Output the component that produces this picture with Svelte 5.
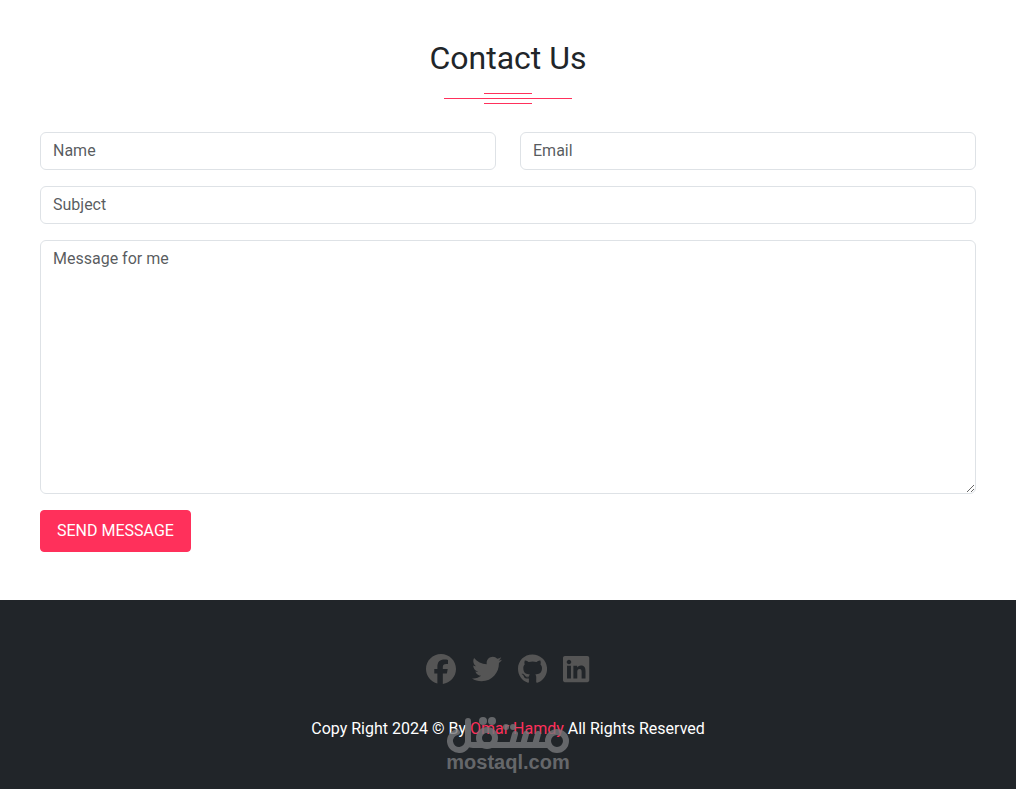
<script lang="ts">
	const icons = [
		{
			label: 'Facebook',
			width: 512,
			path: 'M512 256C512 114.6 397.4 0 256 0S0 114.6 0 256C0 376 82.7 476.8 194.2 504.5V334.2H141.4V256h52.8V222.3c0-87.1 39.4-127.5 125-127.5c16.2 0 44.2 3.2 55.7 6.4V172c-6-.6-16.5-1-29.6-1c-42 0-58.2 15.9-58.2 57.2V256h83.6l-14.4 78.2H287V510.1C413.8 494.8 512 386.9 512 256h0z'
		},
		{
			label: 'Twitter',
			width: 512,
			path: 'M459.37 151.716c.325 4.548.325 9.097.325 13.645 0 138.72-105.583 298.558-298.558 298.558-59.452 0-114.68-17.219-161.137-47.106 8.447.974 16.568 1.299 25.34 1.299 49.055 0 94.213-16.568 130.274-44.832-46.132-.975-84.792-31.188-98.112-72.772 6.498.974 12.995 1.624 19.818 1.624 9.421 0 18.843-1.3 27.614-3.573-48.081-9.747-84.143-51.98-84.143-102.985v-1.299c13.969 7.797 30.214 12.67 47.431 13.319-28.264-18.843-46.781-51.005-46.781-87.391 0-19.492 5.197-37.36 14.294-52.954 51.655 63.675 129.3 105.258 216.365 109.807-1.624-7.797-2.599-15.918-2.599-24.04 0-57.828 46.782-104.934 104.934-104.934 30.213 0 57.502 12.67 76.67 33.137 23.715-4.548 46.456-13.32 66.599-25.34-7.798 24.366-24.366 44.833-46.132 57.827 21.117-2.273 41.584-8.122 60.426-16.243-14.292 20.791-32.161 39.308-52.628 54.253z'
		},
		{
			label: 'GitHub',
			width: 496,
			path: 'M165.9 397.4c0 2-2.3 3.6-5.2 3.6-3.3.3-5.6-1.3-5.6-3.6 0-2 2.3-3.6 5.2-3.6 3-.3 5.6 1.3 5.6 3.6zm-31.1-4.5c-.7 2 1.3 4.3 4.3 4.9 2.6 1 5.6 0 6.2-2s-1.3-4.3-4.3-5.2c-2.6-.7-5.5.3-6.2 2.3zm44.2-1.7c-2.9.7-4.9 2.6-4.6 4.9.3 2 2.9 3.3 5.9 2.6 2.9-.7 4.9-2.6 4.6-4.6-.3-1.9-3-3.2-5.9-2.9zM244.8 8C106.1 8 0 113.3 0 252c0 110.9 69.8 205.8 169.5 239.2 12.8 2.3 17.3-5.6 17.3-12.1 0-6.2-.3-40.4-.3-61.4 0 0-70 15-84.7-29.8 0 0-11.4-29.1-27.8-36.6 0 0-22.9-15.7 1.6-15.4 0 0 24.9 2 38.6 25.8 21.9 38.6 58.6 27.5 72.9 20.9 2.3-16 8.8-27.1 16-33.7-55.9-6.2-112.3-14.3-112.3-110.5 0-27.5 7.6-41.3 23.6-58.9-2.6-6.5-11.1-33.3 2.6-67.9 20.9-6.5 69 27 69 27 20-5.6 41.5-8.5 62.8-8.5s42.8 2.9 62.8 8.5c0 0 48.1-33.6 69-27 13.7 34.7 5.2 61.4 2.6 67.9 16 17.7 25.8 31.5 25.8 58.9 0 96.5-58.9 104.2-114.8 110.5 9.2 7.9 17 22.9 17 46.4 0 33.7-.3 75.4-.3 83.6 0 6.5 4.6 14.4 17.3 12.1C428.2 457.8 496 362.9 496 252 496 113.3 383.5 8 244.8 8z'
		},
		{
			label: 'LinkedIn',
			width: 448,
			path: 'M416 32H31.9C14.3 32 0 46.5 0 64.3v383.4C0 465.5 14.3 480 31.9 480H416c17.6 0 32-14.5 32-32.3V64.3c0-17.8-14.4-32.3-32-32.3zM135.4 416H69V202.2h66.5V416zm-33.2-243c-21.3 0-38.5-17.3-38.5-38.5S80.9 96 102.2 96c21.2 0 38.5 17.3 38.5 38.5 0 21.3-17.2 38.5-38.5 38.5zm282.1 243h-66.4V312c0-24.8-.5-56.7-34.5-56.7-34.6 0-39.9 27-39.9 54.9V416h-66.4V202.2h63.7v29.2h.9c8.9-16.8 30.6-34.5 62.9-34.5 67.2 0 79.7 44.3 79.7 101.9V416z'
		}
	];
</script>

<div class="page">
	<section class="contact">
		<h2>Contact Us</h2>
		<div class="divider">
			<span></span>
			<span class="long"></span>
			<span></span>
		</div>

		<form onsubmit={(e) => e.preventDefault()}>
			<div class="row">
				<input type="text" placeholder="Name" aria-label="Name" />
				<input type="email" placeholder="Email" aria-label="Email" />
			</div>
			<input type="text" placeholder="Subject" aria-label="Subject" />
			<textarea rows="10" placeholder="Message for me" aria-label="Message for me"></textarea>
			<button type="submit">SEND MESSAGE</button>
		</form>
	</section>

	<footer>
		<div class="social">
			{#each icons as icon}
				<a href="/" aria-label={icon.label}>
					<svg viewBox="0 0 {icon.width} 512" height="30" fill="currentColor">
						<path d={icon.path} />
					</svg>
				</a>
			{/each}
		</div>
		<div class="copyright">
			<p>Copy Right 2024 © By <a href="/">Omar Hamdy</a> All Rights Reserved</p>
			<div class="stamp">
				<svg viewBox="0 1 124 37" width="124" height="37" fill="none" stroke="currentColor">
					<g stroke-width="6" stroke-linecap="round">
						<path d="M11 16.2A9 9 0 1 0 22 25V5" />
						<path d="M22 25c0 3 2 4 5 4h74" />
						<circle cx="41" cy="22" r="8" />
						<path d="M69 18l-3 11M80 18l-3 11M92 18l-3 11" />
						<circle cx="111" cy="25" r="9" />
					</g>
					<g fill="currentColor" stroke="none">
						<circle cx="37" cy="5" r="4" />
						<circle cx="46" cy="5" r="4" />
						<circle cx="60" cy="11" r="3" />
						<circle cx="67" cy="11" r="3" />
					</g>
				</svg>
				<span>mostaql.com</span>
			</div>
		</div>
	</footer>
</div>

<style>
	:global(body) {
		margin: 0;
		background: #fff;
	}

	.page {
		display: flex;
		flex-direction: column;
		min-height: 100vh;
		font-family: Roboto, 'Liberation Sans', sans-serif;
		font-size: 16px;
		line-height: 24px;
		color: #212529;
	}

	.contact {
		padding: 39px 40px 48px;
	}

	h2 {
		margin: 0 0 16px;
		font-size: 32px;
		font-weight: 400;
		line-height: 38px;
		text-align: center;
	}

	.divider {
		display: flex;
		flex-direction: column;
		align-items: center;
		gap: 4px;
		margin-bottom: 28px;
	}

	.divider span {
		width: 48px;
		height: 1px;
		background: #ff305b;
	}

	.divider .long {
		width: 128px;
	}

	form {
		display: flex;
		flex-direction: column;
		align-items: flex-start;
		gap: 16px;
	}

	.row {
		display: grid;
		grid-template-columns: 1fr 1fr;
		gap: 24px;
		width: 100%;
	}

	input,
	textarea {
		display: block;
		box-sizing: border-box;
		width: 100%;
		margin: 0;
		padding: 6px 12px;
		border: 1px solid #dee2e6;
		border-radius: 6px;
		background: #fff;
		color: inherit;
		font: inherit;
	}

	input {
		height: 38px;
		padding: 5px 12px 7px;
	}

	textarea {
		resize: vertical;
	}

	input::placeholder,
	textarea::placeholder {
		color: rgba(33, 37, 41, 0.75);
	}

	button {
		padding: 8px 16px;
		border: 1px solid #ff305b;
		border-radius: 4px;
		background: #ff305b;
		color: #fff;
		font: inherit;
		cursor: pointer;
	}

	footer {
		flex: 1;
		padding: 54px 40px 48px;
		background: #212529;
		color: #fff;
	}

	.social {
		display: flex;
		justify-content: center;
		gap: 16px;
		margin-bottom: 33px;
	}

	.social a {
		color: #555;
	}

	.social svg {
		display: block;
	}

	.copyright {
		position: relative;
		text-align: center;
	}

	.copyright p {
		margin: 0;
	}

	.copyright a {
		color: #ff305b;
		text-decoration: none;
	}

	.stamp {
		position: absolute;
		top: 0;
		left: 50%;
		display: flex;
		flex-direction: column;
		align-items: center;
		transform: translateX(-50%);
		color: #77787b;
		opacity: 0.8;
		pointer-events: none;
	}

	.stamp span {
		font-family: 'Liberation Sans', Arial, sans-serif;
		font-size: 20px;
		font-weight: 700;
		line-height: 16px;
	}
</style>
